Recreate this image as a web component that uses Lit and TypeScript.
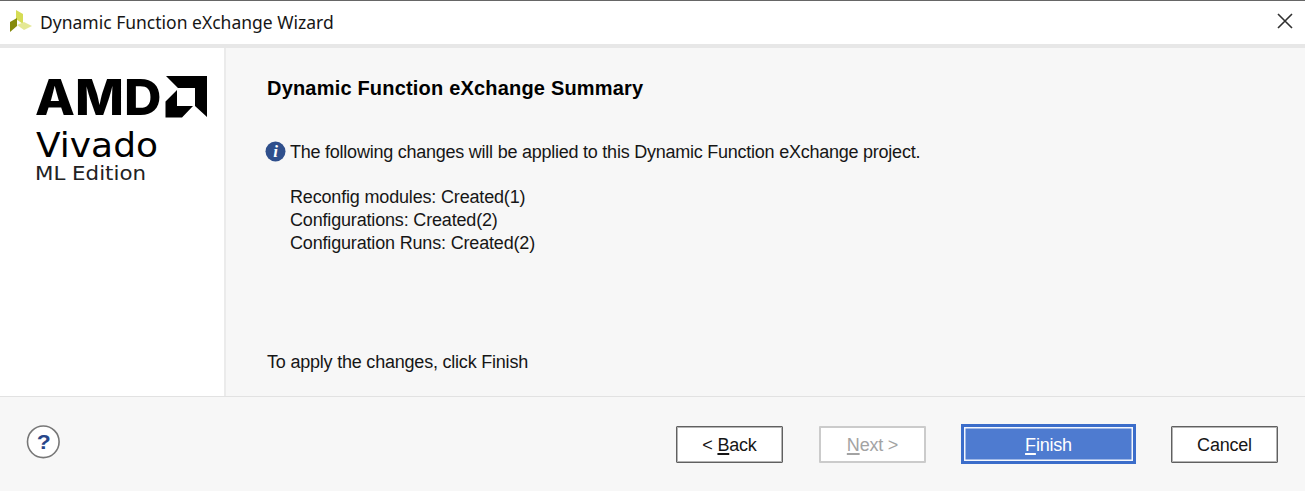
import { LitElement, html, css } from "lit";
import { customElement, property } from "lit/decorators.js";

@customElement("wizard-button")
class WizardButton extends LitElement {
  @property() kind = "normal";

  static styles = css`
    :host { display: block; }
    button {
      display: flex; align-items: center; justify-content: center;
      box-sizing: border-box; width: 107px; height: 37px; padding: 1px 0 0;
      background: #fff; color: #161616; border: 1px solid #606060; border-radius: 1px;
      box-shadow: inset 0 0 0 1px #b4b4b4;
      font: 18px/22px "Liberation Sans", Arial, sans-serif; letter-spacing: -0.2px; white-space: pre;
    }
    .disabled { color: #a3a3a3; border: 2px solid #cbcbcb; box-shadow: none; }
    .primary {
      width: 175px; height: 40px; padding-top: 2px; color: #fff; background: #4e7bd0;
      border: 3px solid #3b6dca; box-shadow: inset 0 0 0 1.5px #f4f7fd; border-radius: 0;
    }
  `;

  render() {
    return html`<button class=${this.kind} ?disabled=${this.kind === "disabled"}><slot></slot></button>`;
  }
}

@customElement("app-root")
class AppRoot extends LitElement {
  static styles = css`
    :host {
      display: flex; flex-direction: column; width: 1305px; height: 491px; overflow: hidden;
      background: #f7f7f7; color: #161616;
      font: 18px/23px "Liberation Sans", Arial, sans-serif; white-space: nowrap;
    }
    svg { display: block; flex: none; }
    header {
      display: flex; align-items: center; box-sizing: border-box; height: 48px; flex: none;
      background: #fff; border-top: 1px solid #666; border-bottom: 4px solid #e7e7e7;
      padding: 0 11px 3px 9px;
    }
    .title { font: 17.5px/24px "Noto Sans", sans-serif; margin-left: 7px; padding-top: 2px; flex: 1; }
    .body { display: flex; height: 348px; flex: none; }
    aside { box-sizing: border-box; width: 226px; background: #fff; border-right: 2px solid #ebebeb; }
    main { display: flex; flex-direction: column; flex: 1; padding-left: 41px; }
    h1 { font-size: 20px; line-height: 24px; font-weight: 700; margin: 28px 0 0; color: #000; letter-spacing: 0.19px; }
    .info { display: flex; align-items: center; gap: 4px; margin: 39px 0 0 -2px; height: 25px; letter-spacing: -0.24px; }
    .info span { padding-top: 2px; }
    .list { margin: 22px 0 0 23px; letter-spacing: -0.17px; }
    .apply { margin-top: 96px; letter-spacing: -0.21px; }
    footer {
      display: flex; align-items: flex-start; box-sizing: border-box; flex: 1;
      border-top: 1px solid #e2e2e2; padding: 27px 27px 0 26px;
    }
    .buttons { display: flex; align-items: center; margin-left: auto; }
    .b2 { margin-left: 36px; }
    .b3 { margin-left: 35px; }
    .b4 { margin-left: 35px; }
    u { text-decoration-thickness: 1.5px; text-underline-offset: 2px; text-decoration-skip-ink: none; }
  `;

  render() {
    return html`
      <header>
        <svg width="24" height="24" viewBox="0 0 24 24">
          <path fill="#d5dc55" d="M7 1L14 5V15L7 10Z" />
          <path fill="#858a0c" d="M1 13L8 9V17L1 23Z" />
          <path fill="#e4e895" d="M8 16L15 13L23 17L15 21Z" />
        </svg>
        <div class="title">Dynamic Function eXchange Wizard</div>
        <svg width="18" height="18" viewBox="0 0 18 18">
          <path d="M2 2L16 16M16 2L2 16" stroke="#303030" stroke-width="1.6" fill="none" />
        </svg>
      </header>
      <div class="body">
        <aside>
          <svg width="224" height="150" viewBox="0 48 224 150">
            <text x="35" y="115" font-family="Inter" font-weight="800" font-size="49" textLength="126.500" lengthAdjust="spacingAndGlyphs">AMD</text>
            <path d="M166 76H207V117L195 106V88H178Z" />
            <path d="M177 90V106H193L182 117.500H165.500V101.500Z" />
            <text x="36" y="157" font-family="DejaVu Sans" font-size="33" textLength="122" lengthAdjust="spacingAndGlyphs">Vivado</text>
            <text x="35" y="180" font-family="DejaVu Sans" font-size="19.500" fill="#222" textLength="111" lengthAdjust="spacingAndGlyphs">ML Edition</text>
          </svg>
        </aside>
        <main>
          <h1>Dynamic Function eXchange Summary</h1>
          <div class="info">
            <svg width="21" height="21" viewBox="0 0 21 21">
              <circle cx="10.500" cy="10.500" r="10" fill="#2f4f8c" />
              <text x="10.500" y="16" text-anchor="middle" font-family="Liberation Serif" font-style="italic" font-weight="700" font-size="17" fill="#fff">i</text>
            </svg>
            <span>The following changes will be applied to this Dynamic Function eXchange project.</span>
          </div>
          <div class="list">
            <div>Reconfig modules: Created(1)</div>
            <div>Configurations: Created(2)</div>
            <div>Configuration Runs: Created(2)</div>
          </div>
          <div class="apply">To apply the changes, click Finish</div>
        </main>
      </div>
      <footer>
        <svg width="35" height="35" viewBox="0 0 35 35">
          <circle cx="17.300" cy="17.800" r="15.800" fill="#fff" stroke="#777" stroke-width="1.600" />
          <text x="17.800" y="25" text-anchor="middle" font-family="Liberation Sans" font-weight="700" font-size="20" textLength="14" lengthAdjust="spacingAndGlyphs" fill="#27468a">?</text>
        </svg>
        <div class="buttons">
          <wizard-button class="b1">&lt; <u>B</u>ack</wizard-button>
          <wizard-button class="b2" kind="disabled"><u>N</u>ext &gt;</wizard-button>
          <wizard-button class="b3" kind="primary"><u>F</u>inish</wizard-button>
          <wizard-button class="b4">Cancel</wizard-button>
        </div>
      </footer>
    `;
  }
}
